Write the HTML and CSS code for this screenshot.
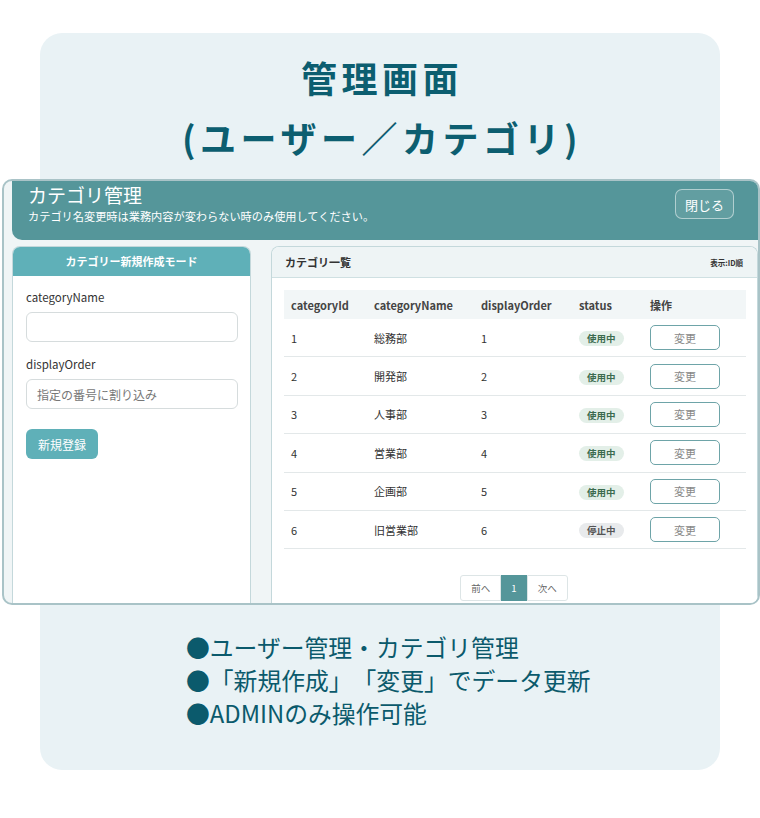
FILE: index.html
```html
<!DOCTYPE html>
<html lang="ja">
<head>
  <meta charset="UTF-8">
  <title>管理画面 (ユーザー／カテゴリ)</title>
  <link rel="stylesheet" href="styles.css">
</head>
<body>
  <div class="frame">
    <h1 class="title">管理画面<br>(ユーザー／カテゴリ)</h1>

    <div class="shot">
      <div class="top-bar">
        <div>
          <div class="top-title">カテゴリ管理</div>
          <div class="top-sub">カテゴリ名変更時は業務内容が変わらない時のみ使用してください。</div>
        </div>
        <button class="close-btn">閉じる</button>
      </div>

      <div class="panels">
        <div class="panel form-panel">
          <div class="form-head">カテゴリー新規作成モード</div>
          <div class="form-body">
            <label class="field-label">categoryName</label>
            <input class="field" type="text">
            <label class="field-label">displayOrder</label>
            <input class="field" type="text" placeholder="指定の番号に割り込み">
            <button class="submit-btn">新規登録</button>
          </div>
        </div>

        <div class="panel list-panel">
          <div class="list-head">
            <span class="list-title">カテゴリ一覧</span>
            <span class="list-sort">表示:ID順</span>
          </div>
          <div class="list-body">
            <table class="cat-table">
              <thead>
                <tr>
                  <th class="c-id">categoryId</th>
                  <th class="c-name">categoryName</th>
                  <th class="c-order">displayOrder</th>
                  <th class="c-status">status</th>
                  <th>操作</th>
                </tr>
              </thead>
              <tbody>
                <tr><td>1</td><td>総務部</td><td>1</td><td><span class="badge">使用中</span></td><td><button class="edit-btn">変更</button></td></tr>
                <tr><td>2</td><td>開発部</td><td>2</td><td><span class="badge">使用中</span></td><td><button class="edit-btn">変更</button></td></tr>
                <tr><td>3</td><td>人事部</td><td>3</td><td><span class="badge">使用中</span></td><td><button class="edit-btn">変更</button></td></tr>
                <tr><td>4</td><td>営業部</td><td>4</td><td><span class="badge">使用中</span></td><td><button class="edit-btn">変更</button></td></tr>
                <tr><td>5</td><td>企画部</td><td>5</td><td><span class="badge">使用中</span></td><td><button class="edit-btn">変更</button></td></tr>
                <tr><td>6</td><td>旧営業部</td><td>6</td><td><span class="badge off">停止中</span></td><td><button class="edit-btn">変更</button></td></tr>
              </tbody>
            </table>

            <div class="pager">
              <span class="page-btn">前へ</span>
              <span class="page-btn current">1</span>
              <span class="page-btn">次へ</span>
            </div>
          </div>
        </div>
      </div>
    </div>

    <ul class="points">
      <li>●ユーザー管理・カテゴリ管理</li>
      <li>●「新規作成」「変更」でデータ更新</li>
      <li>●ADMINのみ操作可能</li>
    </ul>
  </div>
</body>
</html>
```

FILE: styles.css
```css
body {
  margin: 0;
  background: #fff;
  font-family: "Noto Sans CJK JP", "Noto Sans", sans-serif;
}
.frame {
  margin: 33px 0 0 40px;
  width: 680px;
  height: 737px;
  background: #e9f2f5;
  border-radius: 22px;
}
.title {
  margin: 0;
  padding: 14px 0 0 4px;
  text-align: center;
  font-size: 36px;
  letter-spacing: 4.5px;
  line-height: 60px;
  font-weight: 700;
  color: #0c5e70;
}

/* screen capture card */
.shot {
  margin: 12px -40px 0 -38px;
  height: 422px;
  border: 2px solid #a9c3c7;
  border-radius: 10px;
  background: #f0f5f6;
  padding-left: 8px;
  overflow: hidden;
}
.top-bar {
  height: 59px;
  background: #55969a;
  border-radius: 0 0 0 10px;
  display: flex;
  justify-content: space-between;
  align-items: flex-start;
  padding: 0 24px 0 16px;
  color: #fff;
}
.top-title {
  font-size: 19px;
  line-height: 26px;
  margin-top: 1px;
}
.top-sub {
  font-size: 11.2px;
  line-height: 14px;
  margin-top: 1px;
}
.close-btn {
  margin-top: 8px;
  width: 59px;
  height: 30px;
  background: rgba(255,255,255,0.08);
  border: 1px solid rgba(255,255,255,0.5);
  border-radius: 7px;
  color: #fff;
  font-family: inherit;
  font-size: 13px;
}

.panels {
  display: flex;
  gap: 20px;
  margin-top: 6px;
  height: 362px;
}
.panel {
  background: #fff;
  border: 1px solid #c4d8db;
  border-bottom: none;
  border-radius: 8px 8px 0 0;
  overflow: hidden;
}
.form-panel {
  width: 237px;
}
.list-panel {
  flex: 1;
}

.form-head {
  height: 29px;
  line-height: 29px;
  background: #5fb0b8;
  color: #fff;
  text-align: center;
  font-size: 11px;
  font-weight: 700;
}
.form-body {
  padding: 12px 13px;
  display: flex;
  flex-direction: column;
  align-items: flex-start;
}
.field-label {
  font-size: 11.5px;
  color: #333;
  line-height: 18px;
  margin-bottom: 6px;
}
.field {
  box-sizing: border-box;
  width: 212px;
  height: 30px;
  border: 1px solid #d6dcdd;
  border-radius: 6px;
  padding: 0 10px;
  margin-bottom: 13px;
  font-family: inherit;
  font-size: 12px;
}
.field::placeholder {
  color: #777;
}
.submit-btn {
  margin-top: 7px;
  width: 72px;
  height: 30px;
  background: #5fb0b8;
  border: none;
  border-radius: 6px;
  color: #fff;
  font-family: inherit;
  font-size: 12px;
}

.list-head {
  height: 30px;
  background: #eef4f5;
  border-bottom: 1px solid #cfe0e2;
  display: flex;
  justify-content: space-between;
  align-items: center;
  padding: 0 14px 0 13px;
  color: #333;
  font-weight: 700;
}
.list-title {
  font-size: 11px;
}
.list-sort {
  font-size: 7.5px;
}
.list-body {
  padding: 12px 13px 0 12px;
}
.cat-table {
  width: 462px;
  border-collapse: collapse;
  font-size: 11px;
  color: #333;
}
.cat-table th {
  background: #f2f6f7;
  height: 29px;
  text-align: left;
  padding: 0 7px;
  font-weight: 700;
  color: #444;
}
.cat-table td {
  height: 37.4px;
  padding: 0 7px;
  border-bottom: 1px solid #e3e8e9;
}
.c-id { width: 69px; }
.c-name { width: 93px; }
.c-order { width: 84px; }
.c-status { width: 57px; }
.badge {
  display: inline-block;
  padding: 0 8px;
  height: 15px;
  line-height: 15px;
  border-radius: 8px;
  background: #e3efe8;
  color: #3b6b4e;
  font-size: 9.5px;
  font-weight: 700;
}
.badge.off {
  background: #e8eaec;
  color: #555;
}
.edit-btn {
  width: 70px;
  height: 25px;
  background: #fff;
  border: 1px solid #6ea4a8;
  border-radius: 5px;
  color: #888;
  font-family: inherit;
  font-size: 11px;
}

.pager {
  display: flex;
  justify-content: center;
  margin-top: 26px;
}
.page-btn {
  height: 24px;
  line-height: 24px;
  padding: 0 10px;
  border: 1px solid #dde5e6;
  font-size: 9.5px;
  color: #666;
  background: #fff;
}
.page-btn:first-child {
  border-radius: 3px 0 0 3px;
}
.page-btn:last-child {
  border-radius: 0 3px 3px 0;
}
.page-btn.current {
  background: #55969a;
  border-color: #55969a;
  color: #fff;
  padding: 0 9px;
}

.points {
  list-style: none;
  margin: 25px 0 0;
  padding-left: 146px;
  font-size: 23.8px;
  line-height: 33px;
  color: #0b5a6c;
  text-spacing-trim: space-all;
}
```
